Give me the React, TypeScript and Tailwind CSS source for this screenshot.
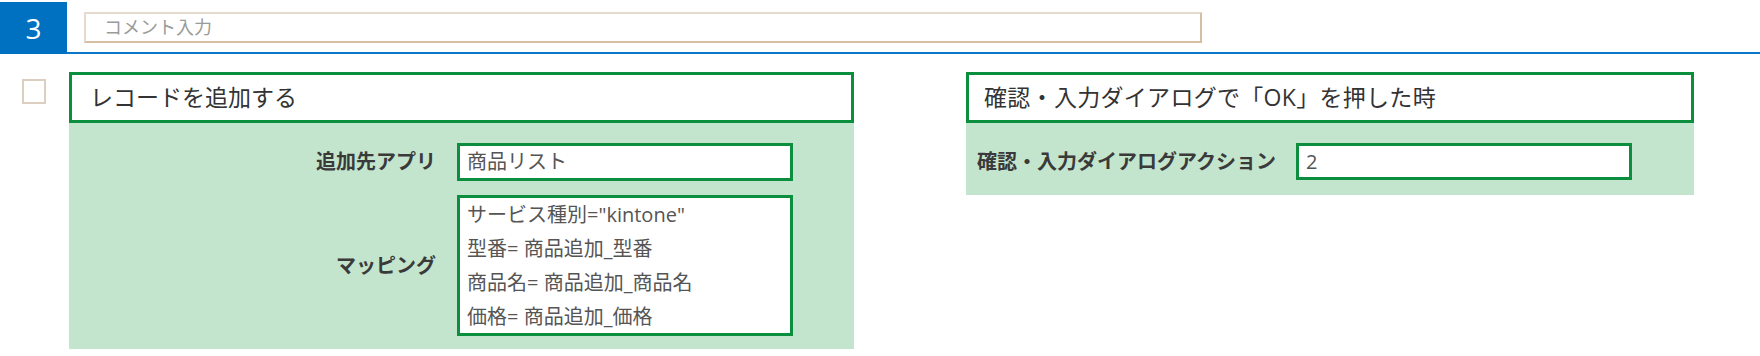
import React from "react";

const font = "font-['Open_Sans','Noto_Sans_CJK_JP',sans-serif]";

const mappingLines = [
  'サービス種別="kintone"',
  "型番= 商品追加_型番",
  "商品名= 商品追加_商品名",
  "価格= 商品追加_価格",
];

const App: React.FC = () => {
  return (
    <div className={`${font} w-[1760px] h-[356px] bg-white pt-[2px] text-[#333]`}>
      {/* Step header */}
      <div className="flex items-center h-[52px] border-b-2 border-[#0a78c8]">
        <div className="w-[67px] h-[52px] -mb-[2px] bg-[#0070c0] text-white text-[28px] flex items-center justify-center self-start">
          3
        </div>
        <input
          type="text"
          placeholder="コメント入力"
          className="ml-[17px] w-[1118px] h-[31px] border-2 border-t-[#e4dacd] border-l-[#e4dacd] border-r-[#d5bea2] border-b-[#d5bea2] pl-[18px] text-[18px] placeholder:text-[#9a9a9a] outline-none"
        />
      </div>

      <div className="flex items-start mt-[18px]">
        <div className="ml-[22px] mt-[7px] w-[24px] h-[25px] border-2 border-[#dccfc0] bg-white" />

        {/* Add record card */}
        <div className="ml-[23px] w-[785px]">
          <div className="h-[51px] border-[3px] border-[#0b8f3e] bg-white flex items-center px-[18px] text-[23px]">
            レコードを追加する
          </div>
          <div className="bg-[#c4e5cd] pt-[20px] pb-[13px] grid grid-cols-[367px_336px] gap-x-[21px] gap-y-[14px] items-center">
            <div className="text-right font-bold text-[20px] text-[#3a3a3a]">追加先アプリ</div>
            <div className="h-[38px] border-[3px] border-[#0b8f3e] bg-white flex items-center pl-[7px] text-[20px] text-[#555]">
              商品リスト
            </div>
            <div className="text-right font-bold text-[20px] text-[#3a3a3a]">マッピング</div>
            <div className="h-[141px] border-[3px] border-[#0b8f3e] bg-white pl-[7px] text-[20px] leading-[34px] text-[#555]">
              {mappingLines.map((line, i) => (
                <div key={i}>{line}</div>
              ))}
            </div>
          </div>
        </div>

        {/* Dialog OK card */}
        <div className="ml-[112px] w-[728px]">
          <div className="h-[51px] border-[3px] border-[#0b8f3e] bg-white flex items-center px-[15px] text-[23px] tracking-[0.3px]">
            確認・入力ダイアログで「OK」を押した時
          </div>
          <div className="bg-[#c4e5cd] pt-[20px] pb-[15px] pl-[11px] flex items-center gap-[20px]">
            <div className="font-bold text-[20px] text-[#3a3a3a]">確認・入力ダイアログアクション</div>
            <div className="w-[336px] h-[37px] border-[3px] border-[#0b8f3e] bg-white flex items-center pl-[7px] text-[20px] text-[#555]">
              2
            </div>
          </div>
        </div>
      </div>
    </div>
  );
};

export default App;
